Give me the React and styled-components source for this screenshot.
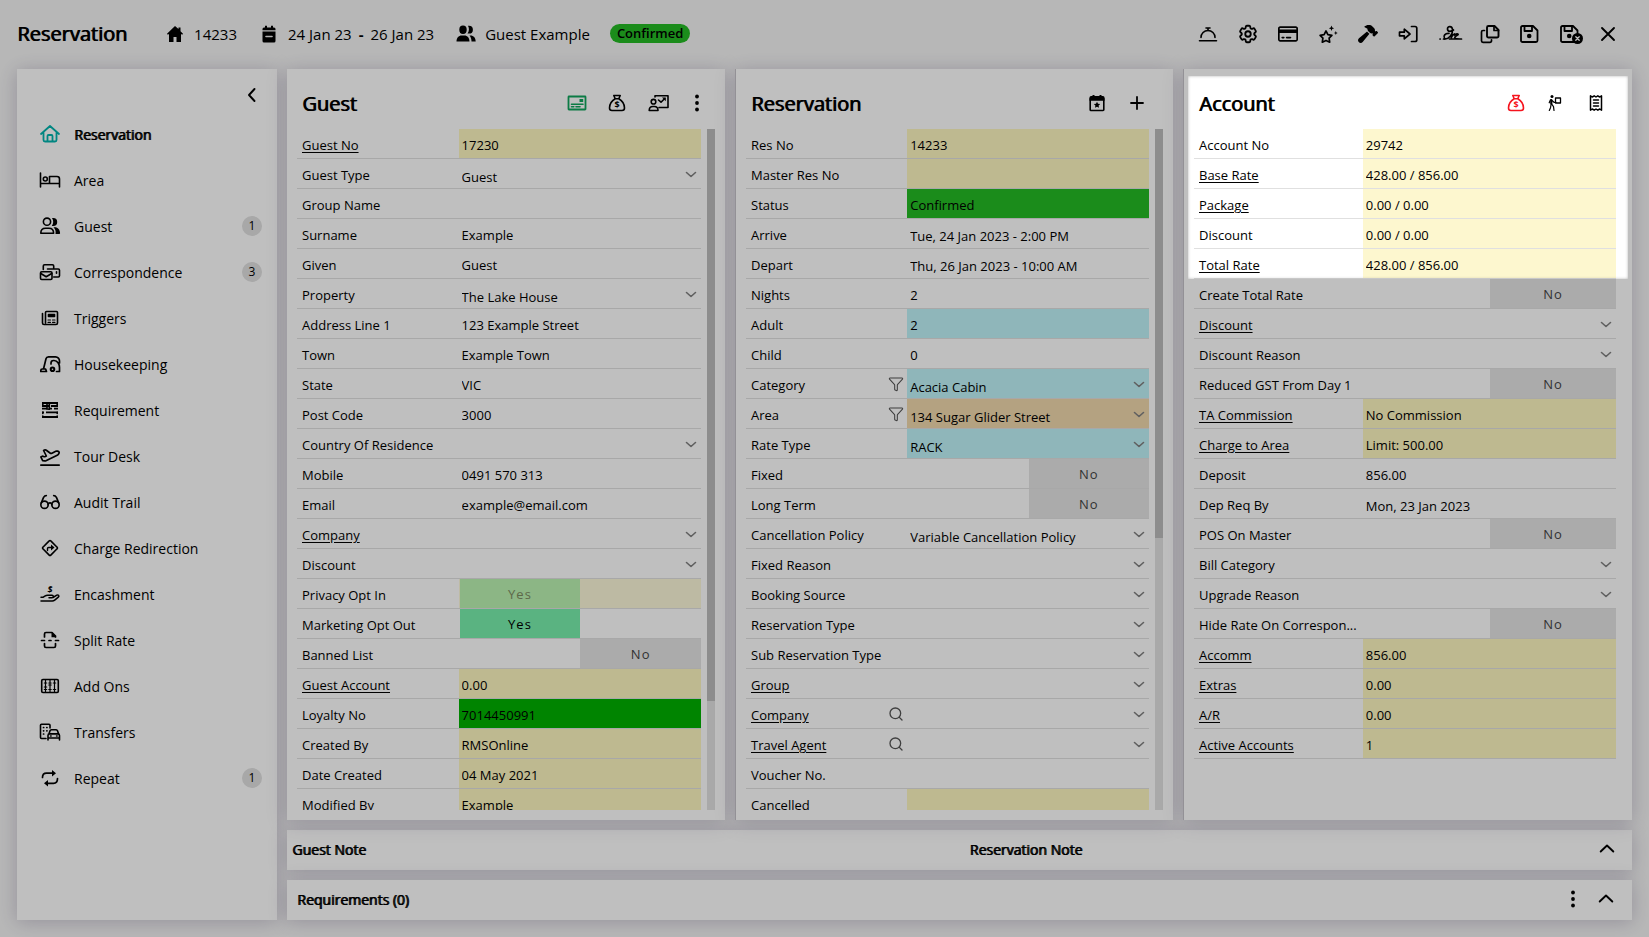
import React from 'react'
import styled, { createGlobalStyle, css } from 'styled-components'
import { Glasses, PlaneTakeoff, Search, Filter } from 'lucide-react'
import { FaHammer, FaRegCreditCard } from 'react-icons/fa6'
import { HiOutlineCog6Tooth } from 'react-icons/hi2'

const tones = {
    cream: '#fdf7cf',
    yellow: '#fef7c0',
    pale: '#fcf8da',
    green: '#25bb25',
    loyal: '#00b000',
    blue: '#bff3f8',
    orange: '#f0d8ad',
}

const navItems = [
    { label: 'Reservation', icon: 'home', active: true },
    { label: 'Area', icon: 'bed' },
    { label: 'Guest', icon: 'users', count: 1 },
    { label: 'Correspondence', icon: 'mail', count: 3 },
    { label: 'Triggers', icon: 'news' },
    { label: 'Housekeeping', icon: 'vacuum' },
    { label: 'Requirement', icon: 'shelves' },
    { label: 'Tour Desk', icon: 'plane' },
    { label: 'Audit Trail', icon: 'glasses' },
    { label: 'Charge Redirection', icon: 'redirect' },
    { label: 'Encashment', icon: 'hand' },
    { label: 'Split Rate', icon: 'split' },
    { label: 'Add Ons', icon: 'abacus' },
    { label: 'Transfers', icon: 'transfer' },
    { label: 'Repeat', icon: 'repeat', count: 1 },
]

const toolbar = [
    ['bell', 'Services'],
    ['gear', 'Settings'],
    ['card', 'Payment'],
    ['stars', 'Features'],
    ['hammer', 'Maintenance'],
    ['checkin', 'Check in'],
    ['sign', 'Signature'],
    ['copy', 'Copy'],
    ['save', 'Save'],
    ['saveExit', 'Save and exit'],
    ['close', 'Close'],
]

const guestRows = [
    { label: 'Guest No', link: true, value: '17230', tone: 'yellow' },
    { label: 'Guest Type', type: 'select', value: 'Guest' },
    { label: 'Group Name' },
    { label: 'Surname', value: 'Example' },
    { label: 'Given', value: 'Guest' },
    { label: 'Property', type: 'select', value: 'The Lake House' },
    { label: 'Address Line 1', value: '123 Example Street' },
    { label: 'Town', value: 'Example Town' },
    { label: 'State', value: 'VIC' },
    { label: 'Post Code', value: '3000' },
    { label: 'Country Of Residence', type: 'select' },
    { label: 'Mobile', value: '0491 570 313' },
    { label: 'Email', value: 'example@email.com' },
    { label: 'Company', link: true, type: 'select' },
    { label: 'Discount', type: 'select' },
    { label: 'Privacy Opt In', type: 'toggle', on: true, locked: true, tone: 'pale' },
    { label: 'Marketing Opt Out', type: 'toggle', on: true },
    { label: 'Banned List', type: 'toggle' },
    { label: 'Guest Account', link: true, value: '0.00', tone: 'yellow' },
    { label: 'Loyalty No', value: '7014450991', tone: 'loyal' },
    { label: 'Created By', value: 'RMSOnline', tone: 'yellow' },
    { label: 'Date Created', value: '04 May 2021', tone: 'yellow' },
    { label: 'Modified By', value: 'Example', tone: 'yellow' },
]

const reservationRows = [
    { label: 'Res No', value: '14233', tone: 'yellow' },
    { label: 'Master Res No', tone: 'yellow' },
    { label: 'Status', value: 'Confirmed', tone: 'green' },
    { label: 'Arrive', type: 'date', value: 'Tue, 24 Jan 2023 - 2:00 PM' },
    { label: 'Depart', type: 'date', value: 'Thu, 26 Jan 2023 - 10:00 AM' },
    { label: 'Nights', value: '2' },
    { label: 'Adult', value: '2', tone: 'blue' },
    { label: 'Child', value: '0' },
    { label: 'Category', type: 'select', value: 'Acacia Cabin', tone: 'blue', tool: 'filter' },
    { label: 'Area', type: 'select', value: '134 Sugar Glider Street', tone: 'orange', tool: 'filter' },
    { label: 'Rate Type', type: 'select', value: 'RACK', tone: 'blue' },
    { label: 'Fixed', type: 'toggle' },
    { label: 'Long Term', type: 'toggle' },
    { label: 'Cancellation Policy', type: 'select', value: 'Variable Cancellation Policy' },
    { label: 'Fixed Reason', type: 'select' },
    { label: 'Booking Source', type: 'select' },
    { label: 'Reservation Type', type: 'select' },
    { label: 'Sub Reservation Type', type: 'select' },
    { label: 'Group', link: true, type: 'select' },
    { label: 'Company', link: true, type: 'select', tool: 'search' },
    { label: 'Travel Agent', link: true, type: 'select', tool: 'search' },
    { label: 'Voucher No.' },
    { label: 'Cancelled', tone: 'yellow' },
]

const accountRows = [
    { label: 'Account No', value: '29742', tone: 'cream' },
    { label: 'Base Rate', link: true, value: '428.00 / 856.00', tone: 'cream' },
    { label: 'Package', link: true, value: '0.00 / 0.00', tone: 'cream' },
    { label: 'Discount', value: '0.00 / 0.00', tone: 'cream' },
    { label: 'Total Rate', link: true, value: '428.00 / 856.00', tone: 'cream' },
    { label: 'Create Total Rate', type: 'toggle' },
    { label: 'Discount', link: true, type: 'select' },
    { label: 'Discount Reason', type: 'select' },
    { label: 'Reduced GST From Day 1', type: 'toggle' },
    { label: 'TA Commission', link: true, value: 'No Commission', tone: 'yellow' },
    { label: 'Charge to Area', link: true, value: 'Limit: 500.00', tone: 'yellow' },
    { label: 'Deposit', value: '856.00' },
    { label: 'Dep Req By', type: 'date', value: 'Mon, 23 Jan 2023' },
    { label: 'POS On Master', type: 'toggle' },
    { label: 'Bill Category', type: 'select' },
    { label: 'Upgrade Reason', type: 'select' },
    { label: 'Hide Rate On Correspon...', type: 'toggle' },
    { label: 'Accomm', link: true, value: '856.00', tone: 'yellow' },
    { label: 'Extras', link: true, value: '0.00', tone: 'yellow' },
    { label: 'A/R', link: true, value: '0.00', tone: 'yellow' },
    { label: 'Active Accounts', link: true, value: '1', tone: 'yellow' },
]

const floppy = (
    <>
        <path strokeWidth="1.8" d="M5 5.5A1.5 1.5 0 0 1 6.500 4H17L21.500 8.500V18.500A1.500 1.500 0 0 1 20 20H6.500A1.500 1.500 0 0 1 5 18.500Z" />
        <path strokeWidth="1.8" d="M8.500 4V9H16V4" />
        <circle cx="13.200" cy="14" r="2.300" fill="currentColor" stroke="none" />
    </>
)

// drawings on a 24 x 24 grid, stroked unless a shape sets its own fill
const shapes = {
    home: <path strokeWidth="1.8" d="M3 12 12 4l9 8M5.5 10.500V18A1.500 1.500 0 0 0 7 19.500h10a1.500 1.500 0 0 0 1.500-1.500v-7.500M9.500 19.500V14a1 1 0 0 1 1-1h3a1 1 0 0 1 1 1v5.500" />,
    bed: <><path d="M2.500 5v14M2.500 15.500h19V19M21.500 15.500V11A2.500 2.500 0 0 0 19 8.500h-7.500v7" /><circle cx="7.300" cy="11" r="2" /></>,
    users: <><circle cx="9" cy="7.700" r="3.600" /><path d="M2.800 19.200c0-3 2-4.900 4.700-4.900h3.400c2.700 0 4.700 1.900 4.700 4.900z" /><path fill="currentColor" stroke="none" d="M14 4h1.200a4 4 0 0 1 0 8h-1.400c1.800-2.400 1.900-5.500.2-8zM15.500 13.300h1.400c3 0 5.200 2.600 5.200 6a.8.8 0 0 1-.8.800h-3.800c.5-2.700-.2-5-2-6.800z" /></>,
    usersSolid: <g fill="currentColor" stroke="none"><ellipse cx="9" cy="7.700" rx="3.700" ry="4.200" /><path d="M2.500 19.500c0-3.800 2.300-6 5-6h3c2.800 0 5 2.200 5 6zM14 3.800h1a3.900 3.900 0 0 1 0 7.800h-1.500c1.700-2.400 1.900-5.300.5-7.800zM15.500 13.500h1c3 0 5.200 2.300 5.200 6h-4.200c0-2.400-.6-4.500-2-6z" /></g>,
    mail: <><path d="M5.300 9.500V6A1.200 1.200 0 0 1 6.500 4.800h8A1.200 1.200 0 0 1 15.700 6v2M9.500 9h10.800a1.200 1.200 0 0 1 1.200 1.200v5.600a1.200 1.200 0 0 1-1.200 1.200h-4.600" /><rect x="2.500" y="11.700" width="11.500" height="7.800" rx="1.200" /><path d="m2.800 13.500 5.400 3.300 5.500-3.300M18.500 11.800v1.400" /></>,
    news: <><path d="M7.500 17V6.500a1 1 0 0 1 1-1h10a1 1 0 0 1 1 1V17a1.500 1.500 0 0 1-1.500 1.500H6A1.500 1.500 0 0 1 4.500 17V7.500" /><path fill="currentColor" d="M10.500 8.500h6v2h-6z" /><path strokeWidth="1.200" d="M10 14h2.500M14.500 14H17M10 16.300h2.500M14.500 16.300H17" /></>,
    vacuum: <><path strokeWidth="1.700" d="M5.500 17 8 6.800a2.600 2.600 0 0 1 2.500-2h7A4 4 0 0 1 21.500 9v2M5.500 17H4.300a1.500 1.500 0 0 0-1.500 1.500v1h5.700L7.600 17ZM13 12v-1a2.500 2.500 0 0 1 2.500-2.500h.5c3.500 0 5.500 3.500 5.500 7v4h-3" /><circle cx="14.500" cy="17.300" r="1.800" strokeWidth="2" /></>,
    shelves: <><path strokeWidth="1.800" strokeLinecap="butt" d="M4 5h16M4 8h7M13 8h7M4 10.700h5M12 10.700h2M16 10.700h4M4 14.300h2M8 14.300h12M4 19h16" /><path strokeWidth="1.600" d="M4.800 4.800v3M19.200 4.800v3M9 6v5l2.300.3V6M4.800 14.300v1.200M19.200 14.300v1.200M4.800 18v1M19.200 18v1" /></>,
    redirect: <><path d="M11.200 4.900a1.100 1.100 0 0 1 1.600 0l6.300 6.300a1.100 1.100 0 0 1 0 1.600l-6.300 6.300a1.100 1.100 0 0 1-1.600 0l-6.300-6.300a1.100 1.100 0 0 1 0-1.600z" /><path strokeWidth="1.400" d="M9.500 14.500v-2a1 1 0 0 1 1-1h4" /><path fill="currentColor" stroke="none" d="m13 8.500 3.500 3-3.500 3z" /></>,
    hand: <><path strokeWidth="1.500" d="M3 15.200h2.300l1.500-1.100a5 5 0 0 1 2.900-.9H14a1.300 1.300 0 0 1 0 2.600h-3M15 15.500l3.800-2.300c1.600-.9 2.800.8 1.500 1.900l-3.600 3c-.8.700-1.500.9-2.500.9H3" /><text x="12" y="10.500" fontSize="9" fontWeight="700" textAnchor="middle" fill="currentColor" stroke="none">$</text></>,
    split: <><path strokeWidth="1.700" d="M6.500 9V6A1.500 1.500 0 0 1 8 4.500h6L17.500 8v1M6.500 15.500V18A1.500 1.500 0 0 0 8 19.500h8a1.500 1.500 0 0 0 1.500-1.500v-2.500M3.500 12.500h3M11 12.500h2M17.500 12.500h3" /><path fill="currentColor" stroke="none" d="M13.500 4 18 8.500v.8h-4.500z" /></>,
    abacus: <><rect x="3.700" y="5.500" width="16.600" height="13" rx="1.200" /><path strokeWidth="1.200" d="M7.500 6v12.500M12 6v12.500M16.500 6v12.500M6.300 9h2.400M6.300 13h2.400M6.300 15.500h2.400M10.800 9h2.400M10.800 11h2.400M10.800 15.500h2.400M15.300 9h2.400M15.300 15.500h2.400" /></>,
    transfer: <><path d="M8 18.500H3.500a1 1 0 0 1-1-1V5.300a1 1 0 0 1 1-1H11a1 1 0 0 1 1 1V8" /><path strokeWidth="1.700" d="M5.500 7.500h.2M8.800 7.500h.2M5.500 10.800h.2M8.800 10.800h.2M5.500 14h.2" /><path d="M11 13.800l1-3a1.500 1.500 0 0 1 1.400-1h4.700a1.500 1.500 0 0 1 1.400 1l1 3M10 20v-4.500a1.600 1.600 0 0 1 1.600-1.600h8.300a1.600 1.600 0 0 1 1.600 1.600V20M10 18h11.500M12.600 16h.5M18.600 16h.5" /></>,
    repeat: <><path strokeWidth="1.700" d="M4.500 11.500c0-2.500 1.600-4.300 4-4.300H15M19.500 12.500c0 2.800-1.600 4.800-4 4.800H9" /><path fill="currentColor" stroke="none" d="M14 4v6.400l4-3.200zM10 14v6.400L6 17.200z" /></>,
    homeSolid: <path fill="currentColor" stroke="none" d="M12 4 4 11.700l.8 1L6 12v8h4.500v-5h3v5H18v-8l1.200.7.8-1-2.500-2.500V5.500h-2v1.600z" />,
    note: <><path fill="currentColor" stroke="none" d="M5.500 9.500h13V19a1.500 1.500 0 0 1-1.500 1.500H7A1.500 1.500 0 0 1 5.500 19zM5.500 8.200V7A1.500 1.500 0 0 1 7 5.500h1V3.700h2v1.800h4V3.700h2v1.800h1A1.500 1.500 0 0 1 18.500 7v1.200z" /><path stroke="#eee" d="M9 14.500h6" /></>,
    bell: <><path strokeWidth="1.600" d="M3.500 18.700h17M5 15.500a7 7 0 0 1 14 0" /><path d="M10 6h4M12 6v2.500" /></>,
    stars: <><path strokeWidth="1.700" d="m10 9 1.900 3.600 4 .7-2.800 2.900.6 4-3.700-1.800-3.700 1.800.6-4-2.800-2.900 4-.7z" /><path fill="currentColor" stroke="none" d="m15.500 3.500.8 1.900 1.900.8-1.900.8-.8 1.900-.8-1.900-1.900-.8 1.900-.8zM19.800 9l.6 1.400 1.400.6-1.400.6-.6 1.400-.6-1.400-1.400-.6 1.400-.6z" /></>,
    checkin: <path strokeWidth="1.700" d="M3.500 10.200v3.600h4.800v3L14 12 8.300 7.200v3zM15.500 4.500H19a1.800 1.800 0 0 1 1.800 1.800v11.400A1.800 1.800 0 0 1 19 19.500h-3.500" />,
    sign: <path strokeWidth="1.700" d="M4 17h.3M7.500 17c5.500.8 9.500-5 9-9.500C16.200 4 11.500 3.500 11.500 7c0 3.300 4 2.500 6 1M13 11.500c-4-.3-6 2.500-4.500 4.800M16 11.500l-.8 4c1-2 2-3 3.200-3.500M18.500 13c1.500-1 2.800-1.700 3.600-.8.600 1-3.300 1.800-3.300 3.300 0 1.700 3.200 1.500 6.700 1.500M13.500 17h5" />,
    copy: <><path strokeWidth="1.900" d="M12.500 4h6L22.500 8v6a1.500 1.500 0 0 1-1.500 1.500h-8.500A1.500 1.500 0 0 1 11 14V5.500A1.500 1.500 0 0 1 12.500 4z" /><path strokeWidth="1.700" d="M8.500 8.500H7A1.500 1.500 0 0 0 5.500 10v8.800A1.500 1.500 0 0 0 7 20.300h7a1.500 1.500 0 0 0 1.500-1.500v-1M18 4v4.500h4.500" /></>,
    save: floppy,
    saveExit: <>{floppy}<circle cx="21.500" cy="16.500" r="5.500" fill="currentColor" stroke="none" /><path stroke="#fff" strokeWidth="1.300" d="m19.800 14.800 3.400 3.400M23.200 14.800l-3.400 3.400" /></>,
    close: <path strokeWidth="1.900" d="m6 6 12 12M18 6 6 18" />,
    badge: <><rect x="3.500" y="5.500" width="17" height="13" rx=".5" strokeWidth="1.800" /><path fill="currentColor" stroke="none" d="M14.500 8h3.700v3h-3.700z" /><path strokeWidth="1.600" d="M6.500 13.200h11.500M6.500 15.800h2.300M11 15.800h4" /></>,
    bag: <><path d="M8.800 4.500h6.400L13.800 7.800h-3.600zM10.200 7.800C6.500 10 4.500 13.500 4.500 17A2.500 2.500 0 0 0 7 19.500h10a2.500 2.500 0 0 0 2.500-2.500c0-3.500-2-7-5.700-9.200" /><text x="12" y="17.300" fontSize="9" fontWeight="700" textAnchor="middle" fill="currentColor" stroke="none">$</text></>,
    present: <g transform="translate(1.500 0)"><circle cx="7" cy="10.700" r="2.300" /><path d="M2.700 19.500c0-2.600 1.600-4 3.700-4h1.400c2.100 0 3.700 1.400 3.700 4zM8.500 6V4.800h13v11.700H12.500M12 9l2.500 2.200 3.500-3.500" /><path fill="currentColor" stroke="none" d="M15.500 6.500h3.800v3.800z" /></g>,
    dots: <g fill="currentColor" stroke="none"><circle cx="12" cy="5.500" r="1.900" /><circle cx="12" cy="12" r="1.900" /><circle cx="12" cy="18.500" r="1.900" /></g>,
    event: <><path d="M6 7h12a.8.8 0 0 1 .8.800V18.700a.8.8 0 0 1-.8.800H6a.8.8 0 0 1-.8-.8V7.800A.8.800 0 0 1 6 7z" /><path fill="currentColor" stroke="none" d="M4.500 9.800V6.500A1.500 1.500 0 0 1 6 5h1.500V4h2v1h5V4h2v1H18a1.500 1.500 0 0 1 1.500 1.500v3.300zM12 10.800l1 2 2.200.3-1.600 1.500.4 2.200-2-1-2 1 .4-2.200-1.600-1.500 2.200-.3z" /></>,
    plus: <path strokeWidth="1.800" d="M12 6v12M6 12h12" />,
    porter: <><circle cx="8" cy="5.500" r="1.500" fill="currentColor" stroke="none" /><path strokeWidth="2.200" d="M7.300 9v4" /><path strokeWidth="1.200" d="m6.500 8.800-1.300 3M8 9.500l2 1.800h2M8 13.500l1.500 2.200.5 3.800M7 14l-.5 2.700L5.300 19.500" /><path strokeWidth="1.300" d="M11.500 7h5v5h-5z" /></>,
    receipt: <><path strokeWidth="1.500" d="M6.500 4.800 8.300 6l1.900-1.200L12 6l1.800-1.200L15.700 6l1.800-1.200v14.400L15.700 18l-1.900 1.200L12 18l-1.800 1.200L8.300 18l-1.800 1.200z" /><path strokeWidth="1.500" d="M9.500 9h5M9.500 12h5M9.500 15h5" /></>,
    left: <path strokeWidth="1.900" d="m14.500 6-5.500 6 5.500 6" />,
    up: <path strokeWidth="1.900" d="m5.700 14.500 6.300-6 6.300 6" />,
    down: <path d="m7.500 10.500 4.500 4 4.500-4" />,
}

const Icon = ({ name }) => {
    if (name === 'plane') return <PlaneTakeoff size={22} strokeWidth={1.8} />
    if (name === 'glasses') return <Glasses size={22} strokeWidth={1.8} />
    if (name === 'gear') return <HiOutlineCog6Tooth size={22} strokeWidth={2} />
    if (name === 'hammer') return <FaHammer size={20} />
    if (name === 'card') return <FaRegCreditCard size={20} />
    if (name === 'filter') return <Filter size={16} strokeWidth={1.6} />
    if (name === 'search') return <Search size={16} strokeWidth={2} />
    return <Glyph viewBox="0 0 24 24" aria-hidden="true">{shapes[name]}</Glyph>
}

const Field = ({ id, row }) => {
    const { label, link, type, value = '', tone, tool, on, locked } = row
    return (
        <Row>
            <Name>
                {link ? <a href="#open">{label}</a> : <label htmlFor={id}>{label}</label>}
                {tool && <Tool type="button" aria-label={`${tool} ${label}`}><Icon name={tool} /></Tool>}
            </Name>
            <Cell $tone={tone}>
                {type === 'toggle' && (
                    <Toggle id={id} type="button" role="switch" aria-checked={!!on} disabled={locked} $on={on}>
                        <span>{on ? 'Yes' : 'No'}</span>
                    </Toggle>
                )}
                {type === 'select' && (
                    <>
                        <Select id={id} aria-label={label} defaultValue={value}>
                            <option value={value}>{value}</option>
                        </Select>
                        <Arrow><Icon name="down" /></Arrow>
                    </>
                )}
                {(!type || type === 'date') && (
                    <Input id={id} aria-label={label} defaultValue={value} $date={type === 'date'} />
                )}
            </Cell>
        </Row>
    )
}

const Card = ({ title, icons, rows, thumb, edge, children }) => (
    <Panel $edge={edge}>
        <PanelHead $tight={title === 'Guest'}>
            <h2>{title}</h2>
            <Icons>
                {icons.map(([name, label, color]) => (
                    <IconButton key={name} type="button" aria-label={label} $color={color}><Icon name={name} /></IconButton>
                ))}
            </Icons>
        </PanelHead>
        <PanelBody $plain={!thumb}>
            <List>
                {rows.map((row, i) => <Field key={i} id={`${title}-${i}`} row={row} />)}
            </List>
            {thumb && <Track><Thumb $size={thumb} /></Track>}
        </PanelBody>
        {children}
    </Panel>
)

const App = () => {
    return (
        <Page>
            <Global />
            <Header>
                <h1>Reservation</h1>
                <Facts>
                    <Fact><Icon name="homeSolid" />14233</Fact>
                    <Fact><Icon name="note" />24 Jan 23<b>-</b>26 Jan 23</Fact>
                    <Fact><Icon name="usersSolid" />Guest Example</Fact>
                    <Pill>Confirmed</Pill>
                </Facts>
                <Icons>
                    {toolbar.map(([name, label]) => (
                        <IconButton key={name} type="button" aria-label={label}><Icon name={name} /></IconButton>
                    ))}
                </Icons>
            </Header>
            <Body>
                <Sidebar>
                    <Collapse><IconButton type="button" aria-label="Collapse menu"><Icon name="left" /></IconButton></Collapse>
                    {navItems.map((item) => (
                        <NavItem key={item.label} href="#section" $active={item.active}>
                            <NavIcon><Icon name={item.icon} /></NavIcon>
                            <span>{item.label}</span>
                            {item.count && <Count>{item.count}</Count>}
                        </NavItem>
                    ))}
                </Sidebar>
                <Main>
                    <Columns>
                        <Card
                            title="Guest"
                            rows={guestRows}
                            thumb={84}
                            icons={[['badge', 'Guest card', '#10a45c'], ['bag', 'Guest account'], ['present', 'Profile'], ['dots', 'More']]}
                        />
                        <Card
                            title="Reservation"
                            rows={reservationRows}
                            thumb={60}
                            edge
                            icons={[['event', 'Events'], ['plus', 'Add']]}
                        />
                        <Card
                            title="Account"
                            rows={accountRows}
                            edge
                            icons={[['bag', 'Account', '#f5141e'], ['porter', 'Move'], ['receipt', 'Receipt']]}
                        >
                            <Spotlight />
                        </Card>
                    </Columns>
                    <Notes>
                        <h3>Guest Note</h3>
                        <h3>Reservation Note</h3>
                        <IconButton type="button" aria-label="Expand notes"><Icon name="up" /></IconButton>
                    </Notes>
                    <Requirements>
                        <h3>Requirements (0)</h3>
                        <Icons $near>
                            <IconButton type="button" aria-label="More"><Icon name="dots" /></IconButton>
                            <IconButton type="button" aria-label="Expand requirements"><Icon name="up" /></IconButton>
                        </Icons>
                    </Requirements>
                </Main>
            </Body>
        </Page>
    )
}

export default App

const Global = createGlobalStyle`
    * {
        box-sizing: border-box;
    }

    body {
        margin: 0;
        background: #f5f5f5;
        color: #000;
        font-family: 'Open Sans', 'Noto Sans', sans-serif;
        font-size: 13px;
    }

    h1, h2, h3 {
        margin: 0;
        font-size: 20px;
        font-weight: 400;
        text-shadow: 1px 0 0 #000;
    }

    h3 {
        font-size: 14px;
    }

    a {
        color: inherit;
    }

    button, input, select {
        font: inherit;
        color: inherit;
        border: none;
        background: none;
        padding: 0;
        border-radius: 0;
    }
`

const surface = css`
    background: #fff;
    box-shadow: 0 2px 18px rgba(60, 45, 90, 0.25);
`

const Page = styled.div`
    height: 100vh;
    overflow: hidden;
    display: flex;
    flex-direction: column;
    padding: 0 17px 17px;
`

const Header = styled.header`
    display: flex;
    align-items: center;
    height: 69px;
    flex-shrink: 0;
    gap: 36px;
    padding: 0 12px 2px 0;
`

const Glyph = styled.svg`
    width: 24px;
    height: 24px;
    flex-shrink: 0;
    overflow: visible;
    fill: none;
    stroke: currentColor;
    stroke-width: 1.6;
    stroke-linecap: round;
    stroke-linejoin: round;
`

const Facts = styled.div`
    display: flex;
    align-items: center;
    gap: 20px;
    flex: 1;
    font-size: 15px;
`

const Fact = styled.span`
    display: flex;
    align-items: center;
    gap: 7px;
    white-space: nowrap;
`

const Pill = styled.span`
    height: 19px;
    line-height: 18px;
    padding: 0 7px;
    border-radius: 10px;
    background: #25bb25;
    font-size: 13px;
    font-weight: 600;
`

const Icons = styled.div`
    display: flex;
    align-items: center;
    gap: ${({ $near }) => ($near ? '9px' : '16px')};
`

const IconButton = styled.button`
    display: flex;
    align-items: center;
    justify-content: center;
    width: 24px;
    height: 24px;
    color: ${({ $color }) => $color || '#000'};
    cursor: pointer;
`

const Body = styled.div`
    display: flex;
    flex: 1;
    min-height: 0;
    gap: 10px;
`

const Sidebar = styled.nav`
    ${surface}
    width: 260px;
    flex-shrink: 0;
`

const Collapse = styled.div`
    display: flex;
    justify-content: flex-end;
    padding: 14px 13px 4px;
`

const NavItem = styled.a`
    display: flex;
    align-items: center;
    height: 46px;
    padding: 0 15px 0 21px;
    gap: 12px;
    font-size: 14px;
    text-decoration: none;

    span {
        flex: 1;
    }

    ${({ $active }) => $active && css`
        text-shadow: 1px 0 0 #000;

        svg {
            color: #00b3ad;
        }
    `}
`

const NavIcon = styled.i`
    display: flex;
    justify-content: center;
    width: 24px;
`

const Count = styled.b`
    width: 20px;
    line-height: 20px;
    border-radius: 50%;
    background: #e0e0e0;
    font-size: 12px;
    font-weight: 400;
    text-align: center;
`

const Main = styled.main`
    flex: 1;
    min-width: 0;
    display: flex;
    flex-direction: column;
    gap: 10px;
`

const Columns = styled.div`
    flex: 1;
    min-height: 0;
    display: grid;
    grid-template-columns: 438fr 438fr 449fr;
    gap: 10px;
`

const Panel = styled.section`
    ${surface}
    position: relative;
    display: flex;
    flex-direction: column;
    min-width: 0;
    min-height: 0;
    border-left: ${({ $edge }) => ($edge ? '1px solid #c4c2c8' : 'none')};
`

const PanelHead = styled.div`
    display: flex;
    align-items: center;
    justify-content: space-between;
    height: 60px;
    flex-shrink: 0;
    padding: 8px ${({ $tight }) => ($tight ? '16px' : '24px')} 0 15px;
`

const PanelBody = styled.div`
    flex: 1;
    min-height: 0;
    display: flex;
    gap: 6px;
    padding: 0 ${({ $plain }) => ($plain ? '16px' : '10px')} 10px 10px;
`

const List = styled.div`
    flex: 1;
    min-width: 0;
    overflow-y: auto;
    scrollbar-width: none;
`

const Track = styled.div`
    width: 8px;
    background: #e2e2e2;
`

const Thumb = styled.div`
    height: ${({ $size }) => $size}%;
    background: #bdbdbd;
`

const Row = styled.div`
    display: grid;
    grid-template-columns: 2fr 3fr;
    height: 30px;
    border-bottom: 1px solid #e0e0e0;
`

const Name = styled.div`
    display: flex;
    align-items: center;
    justify-content: space-between;
    min-width: 0;
    padding: 0 3px 0 5px;
    white-space: nowrap;

    a, label {
        padding-top: 3px;
    }

    a {
        text-underline-offset: 2px;
    }
`

const Tool = styled.button`
    display: flex;
    color: #555;
`

const Cell = styled.div`
    display: flex;
    min-width: 0;
    background: ${({ $tone }) => tones[$tone] || 'transparent'};
`

const Input = styled.input`
    width: 100%;
    padding: ${({ $date }) => ($date ? '5px' : '3px')} 3px 0;
`

const Select = styled.select`
    flex: 1;
    min-width: 0;
    padding: 7px 3px 0;
    appearance: none;
`

const Arrow = styled.span`
    display: flex;
    align-items: center;
    justify-content: center;
    width: 20px;
    color: #808080;
    pointer-events: none;
`

const Toggle = styled.button`
    display: flex;
    flex: 1;
    padding-left: 1px;
    justify-content: ${({ $on }) => ($on ? 'flex-start' : 'flex-end')};
    letter-spacing: 1px;

    span {
        width: 50%;
        padding-top: 2px;
        line-height: 27px;
        color: ${({ $on }) => ($on ? '#000' : '#444')};
        background: ${({ $on }) => ($on ? '#79efac' : '#e5e5e5')};
    }

    &:disabled span {
        color: #7d8c62;
        background: #bbf3b2;
    }
`

const Spotlight = styled.div`
    position: absolute;
    inset: 7px 4px auto;
    height: 203px;
    z-index: 2;
    pointer-events: none;
    box-shadow: 0 0 0 9999px rgba(0, 0, 0, 0.25), inset 0 0 3px rgba(0, 0, 0, 0.3);
`

const Notes = styled.section`
    ${surface}
    display: grid;
    grid-template-columns: 13fr 12fr auto;
    align-items: center;
    height: 40px;
    padding: 0 13px 2px 5px;
`

const Requirements = styled.section`
    ${surface}
    display: flex;
    align-items: center;
    justify-content: space-between;
    height: 40px;
    padding: 0 14px 2px 10px;
`
